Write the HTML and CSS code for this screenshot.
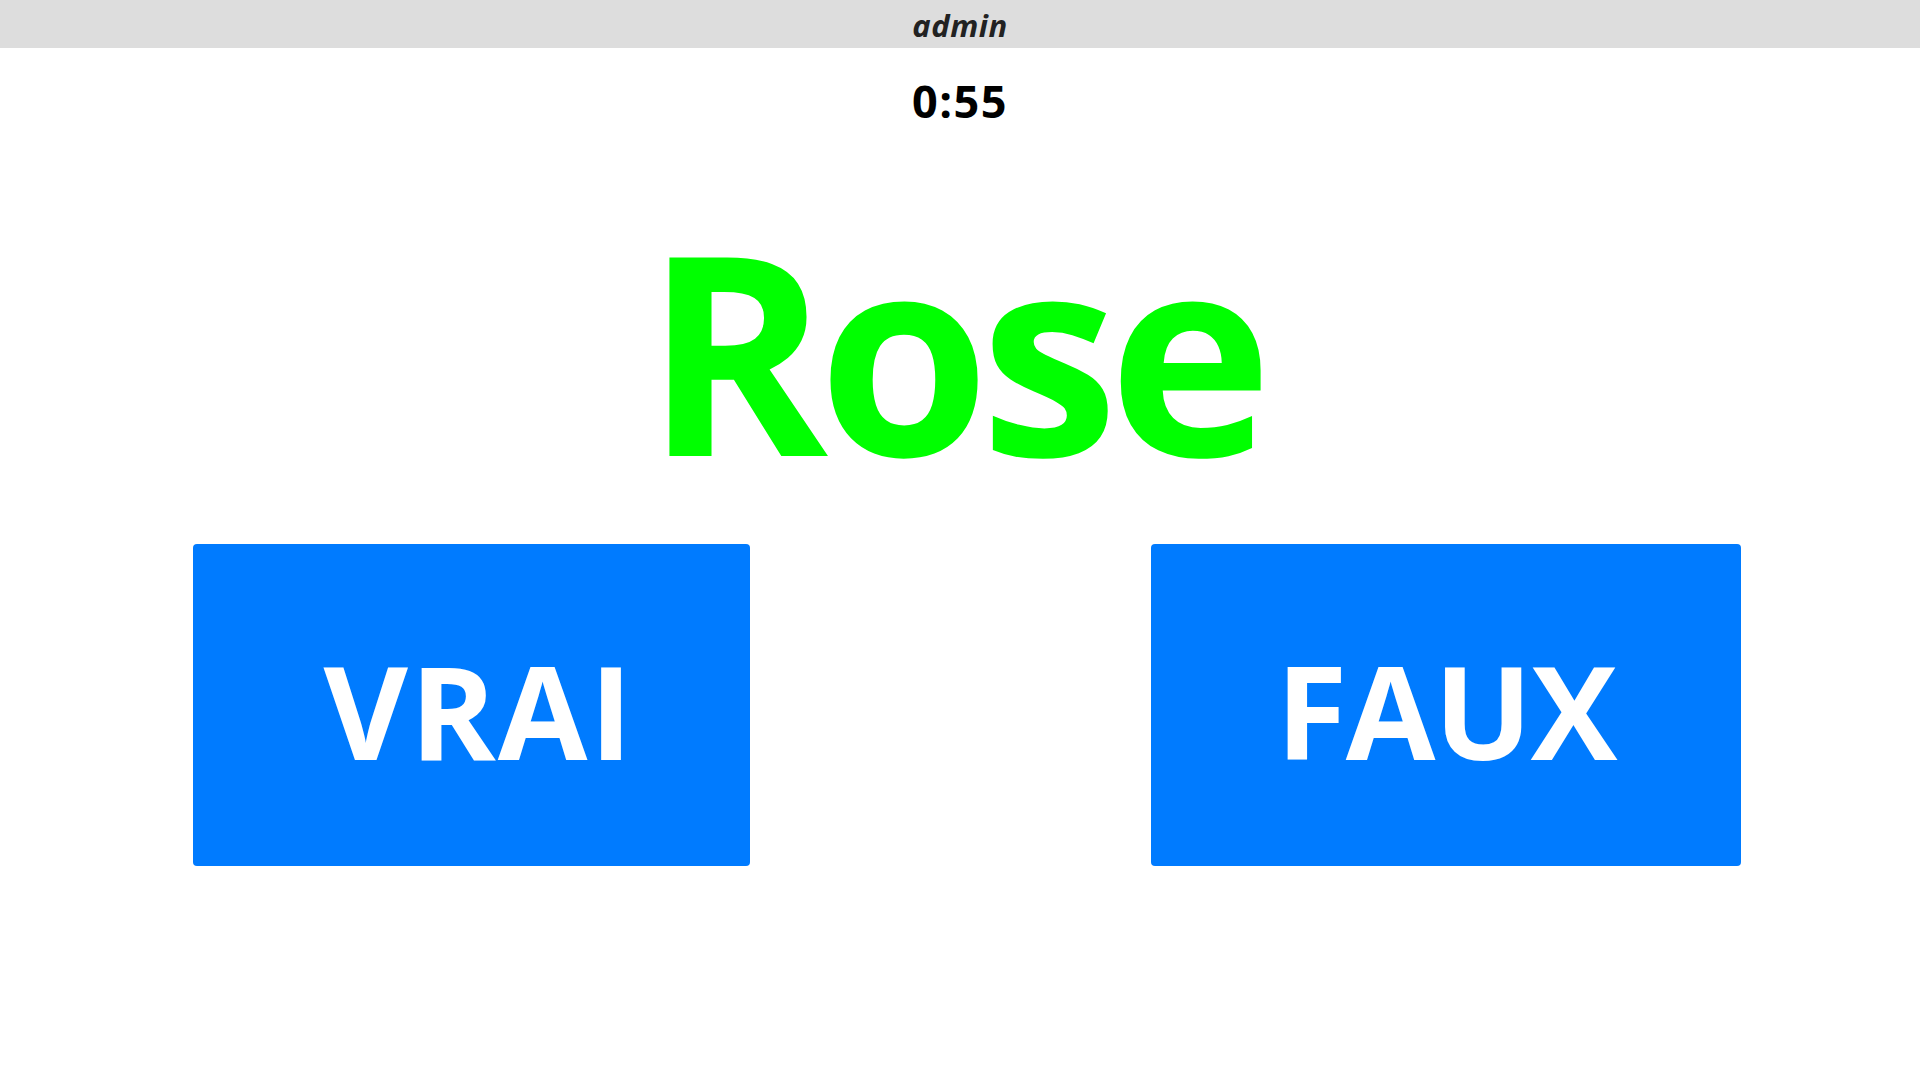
FILE: index.html
```html
<!DOCTYPE html>
<html lang="fr">
<head>
<meta charset="utf-8">
<title>Quiz</title>
<link rel="stylesheet" href="styles.css">
</head>
<body>
<header class="topbar"><span class="user">admin</span></header>
<main class="game">
  <div class="timer">0:55</div>
  <div class="word">Rose</div>
  <div class="answers">
    <button class="answer answer-true">VRAI</button>
    <button class="answer answer-false">FAUX</button>
  </div>
</main>
</body>
</html>
```
FILE: styles.css
```css
html, body {
  margin: 0;
  padding: 0;
  background: #ffffff;
  font-family: "Open Sans", "Noto Sans", sans-serif;
}
.topbar {
  height: 48px;
  background: #dddddd;
  display: flex;
  align-items: center;
  justify-content: center;
}
.user {
  font-size: 31px;
  font-weight: 700;
  font-style: italic;
  color: #222222;
  line-height: 1;
  padding-top: 2px;
  letter-spacing: 0.5px;
}
.game {
  display: flex;
  flex-direction: column;
  align-items: center;
}
.timer {
  margin-top: 23px;
  font-size: 45px;
  line-height: 60px;
  font-weight: 700;
  color: #000000;
  letter-spacing: 1.5px;
}
.word {
  margin-top: 78px;
  padding-right: 13px;
  font-size: 278px;
  line-height: 278px;
  font-weight: 700;
  color: #00ff00;
  letter-spacing: -10px;
}
.answers {
  align-self: stretch;
  display: flex;
  margin-top: 57px;
  padding-left: 193px;
  gap: 401px;
}
.answer {
  height: 322px;
  padding: 8px 0 0;
  border: none;
  border-radius: 4px;
  background: #007bff;
  color: #ffffff;
  font-family: "Open Sans", "Noto Sans", sans-serif;
  font-size: 130px;
  font-weight: 700;
  line-height: normal;
}
.answer-true {
  width: 557px;
  padding-left: 15px;
  letter-spacing: 2px;
}
.answer-false {
  width: 590px;
  letter-spacing: -1.5px;
}
```
